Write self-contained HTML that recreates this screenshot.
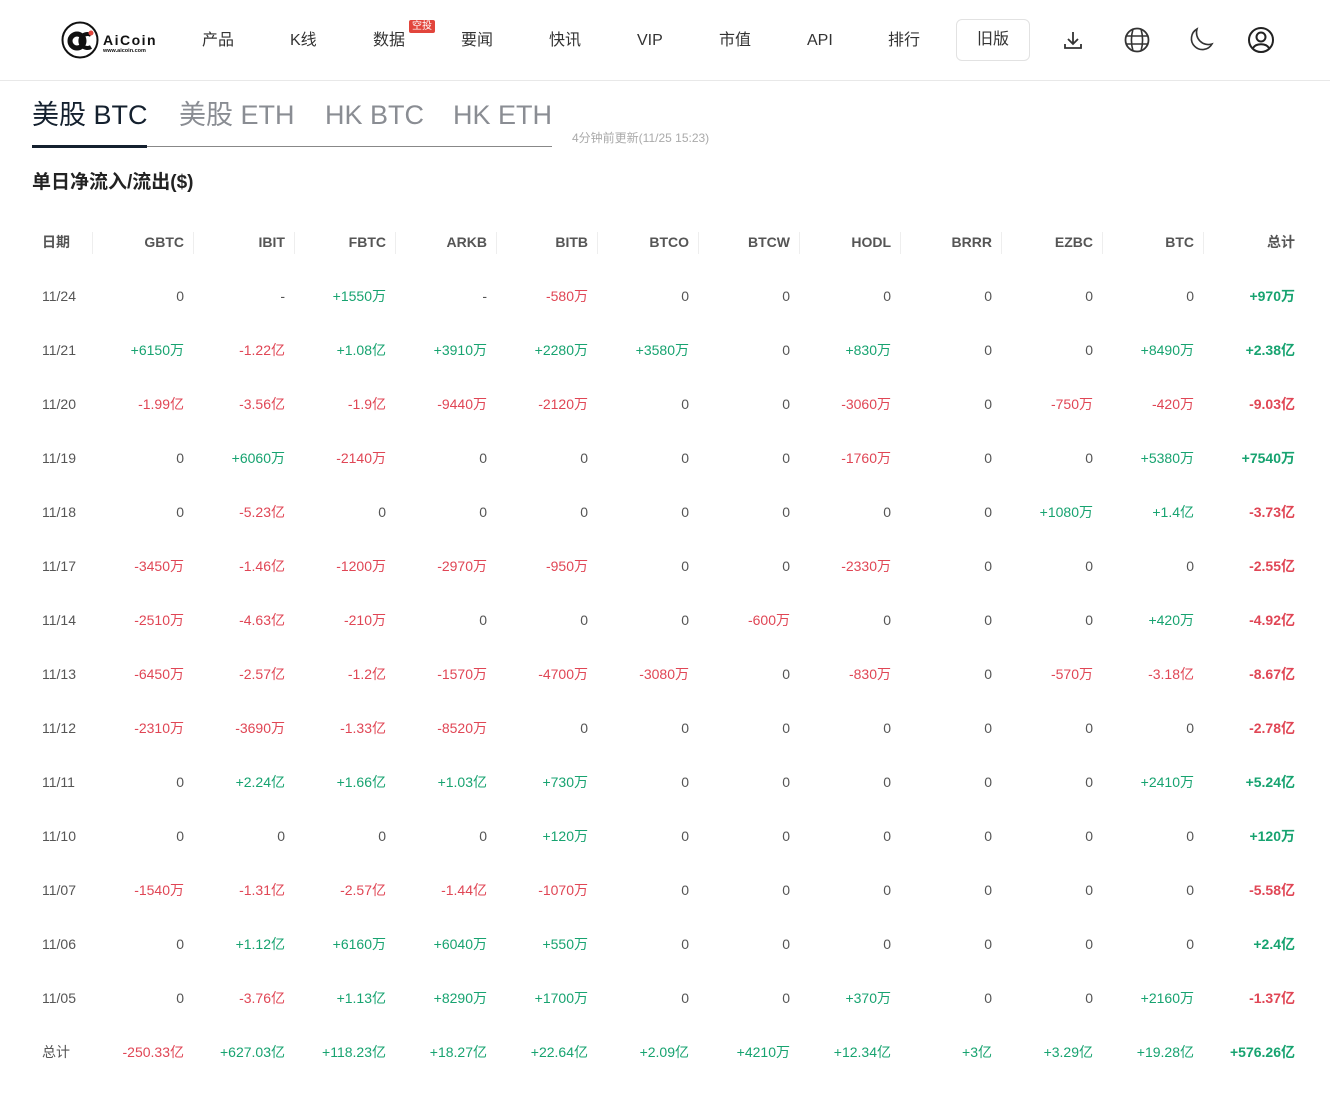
<!DOCTYPE html>
<html><head><meta charset="utf-8"><style>
*{margin:0;padding:0;box-sizing:border-box}
body{width:1330px;height:1120px;background:#fff;font-family:"Liberation Sans","Noto Sans CJK SC",sans-serif;color:#333;position:relative;overflow:hidden}
.hdr{position:absolute;left:0;top:0;width:1330px;height:81px;border-bottom:1px solid #e8e8e8}
.nav{position:absolute;top:30px;height:22px;line-height:22px;font-size:16px;color:#333}
.badge{position:absolute;left:409px;top:20px;background:#e2453c;color:#fff;font-size:10px;padding:0 3px;border-radius:2px;line-height:13px;height:13px}
.old{position:absolute;left:956px;top:19px;width:74px;height:42px;border:1px solid #e2e2e2;border-radius:6px;font-size:16px;text-align:center;line-height:40px;color:#333}
.ic{position:absolute;top:26px}
.tab{position:absolute;white-space:nowrap;top:97px;height:36px;line-height:36px;font-size:27px}
.tline{position:absolute;left:32px;top:146px;width:520px;height:1px;background:#888}
.tact{position:absolute;left:32px;top:145px;width:115px;height:3px;background:#14202e}
.upd{position:absolute;left:572px;top:130px;font-size:12px;color:#aaa;line-height:16px}
h2{position:absolute;left:32px;top:170px;font-size:19px;line-height:26px;font-weight:bold;color:#222}
table{position:absolute;left:32px;top:215px;border-collapse:collapse;table-layout:fixed;width:1273px}
td,th{height:54px;text-align:right;padding-right:10px;font-size:14px;color:#555;font-weight:normal;white-space:nowrap}
th{font-weight:bold;color:#555;font-size:14px;position:relative}
th::after{content:"";position:absolute;right:0;top:17px;width:1px;height:22px;background:#eee}
th:last-child::after{display:none}
td:first-child,th:first-child{text-align:left;padding-left:10px}
.g{color:#17a370}.r{color:#e04655}
td:last-child{font-weight:bold}
</style></head><body>
<div class="hdr">
<svg style="position:absolute;left:61px;top:21px" width="100" height="38" viewBox="0 0 100 38">
<circle cx="19" cy="19" r="17.5" fill="none" stroke="#111" stroke-width="2"/>
<circle cx="16" cy="20" r="7" fill="none" stroke="#111" stroke-width="5"/>
<path d="M30 14a7 7 0 1 0 0 12" fill="none" stroke="#111" stroke-width="4"/>
<circle cx="30" cy="12" r="2.5" fill="#e2453c"/>
<text x="42" y="24" font-size="14" font-weight="bold" font-family="Liberation Sans" fill="#111" letter-spacing="1.5">AiCoin</text>
<text x="42" y="31" font-size="5.5" font-weight="bold" font-family="Liberation Sans" fill="#111">www.aicoin.com</text>
</svg>
<div class="nav" style="left:202px">产品</div>
<div class="nav" style="left:290px">K线</div>
<div class="nav" style="left:373px">数据</div>
<div class="badge">空投</div>
<div class="nav" style="left:461px">要闻</div>
<div class="nav" style="left:549px">快讯</div>
<div class="nav" style="left:637px">VIP</div>
<div class="nav" style="left:719px">市值</div>
<div class="nav" style="left:807px">API</div>
<div class="nav" style="left:888px">排行</div>
<div class="old">旧版</div>
<svg class="ic" style="left:1061px" width="24" height="28" viewBox="0 0 24 28"><path d="M12 6v12M7 13l5 5 5-5M4 18v4h16v-4" fill="none" stroke="#333" stroke-width="1.8"/></svg>
<svg class="ic" style="left:1123px" width="28" height="28" viewBox="0 0 28 28"><circle cx="14" cy="14" r="11.5" fill="none" stroke="#333" stroke-width="1.8"/><path d="M2.5 10h23M2.5 18h23M10 3c-2 7-2 15 0 22M18 3c2 7 2 15 0 22" fill="none" stroke="#333" stroke-width="1.6"/></svg>
<svg class="ic" style="left:1187px" width="28" height="28" viewBox="0 0 28 28"><path d="M10 3a11 11 0 1 0 15 15A12 12 0 0 1 10 3z" fill="none" stroke="#333" stroke-width="1.6"/></svg>
<svg class="ic" style="left:1247px" width="28" height="28" viewBox="0 0 28 28"><circle cx="14" cy="14" r="12" fill="none" stroke="#222" stroke-width="2"/><circle cx="14" cy="11" r="4.5" fill="none" stroke="#222" stroke-width="2"/><path d="M6 22c3-5 13-5 16 0" fill="none" stroke="#222" stroke-width="2"/></svg>
</div>
<div class="tab" style="left:32px;color:#14202e">美股 BTC</div>
<div class="tab" style="left:179px;color:#8a8d93">美股 ETH</div>
<div class="tab" style="left:325px;color:#8a8d93">HK BTC</div>
<div class="tab" style="left:453px;color:#8a8d93">HK ETH</div>
<div class="tline"></div><div class="tact"></div>
<div class="upd">4分钟前更新(11/25 15:23)</div>
<h2>单日净流入/流出($)</h2>
<table>
<colgroup><col style="width:61px"><col span="12" style="width:101px"></colgroup>
<tr><th>日期</th><th>GBTC</th><th>IBIT</th><th>FBTC</th><th>ARKB</th><th>BITB</th><th>BTCO</th><th>BTCW</th><th>HODL</th><th>BRRR</th><th>EZBC</th><th>BTC</th><th>总计</th></tr>
<tr><td>11/24</td><td>0</td><td>-</td><td class="g">+1550万</td><td>-</td><td class="r">-580万</td><td>0</td><td>0</td><td>0</td><td>0</td><td>0</td><td>0</td><td class="g">+970万</td></tr>
<tr><td>11/21</td><td class="g">+6150万</td><td class="r">-1.22亿</td><td class="g">+1.08亿</td><td class="g">+3910万</td><td class="g">+2280万</td><td class="g">+3580万</td><td>0</td><td class="g">+830万</td><td>0</td><td>0</td><td class="g">+8490万</td><td class="g">+2.38亿</td></tr>
<tr><td>11/20</td><td class="r">-1.99亿</td><td class="r">-3.56亿</td><td class="r">-1.9亿</td><td class="r">-9440万</td><td class="r">-2120万</td><td>0</td><td>0</td><td class="r">-3060万</td><td>0</td><td class="r">-750万</td><td class="r">-420万</td><td class="r">-9.03亿</td></tr>
<tr><td>11/19</td><td>0</td><td class="g">+6060万</td><td class="r">-2140万</td><td>0</td><td>0</td><td>0</td><td>0</td><td class="r">-1760万</td><td>0</td><td>0</td><td class="g">+5380万</td><td class="g">+7540万</td></tr>
<tr><td>11/18</td><td>0</td><td class="r">-5.23亿</td><td>0</td><td>0</td><td>0</td><td>0</td><td>0</td><td>0</td><td>0</td><td class="g">+1080万</td><td class="g">+1.4亿</td><td class="r">-3.73亿</td></tr>
<tr><td>11/17</td><td class="r">-3450万</td><td class="r">-1.46亿</td><td class="r">-1200万</td><td class="r">-2970万</td><td class="r">-950万</td><td>0</td><td>0</td><td class="r">-2330万</td><td>0</td><td>0</td><td>0</td><td class="r">-2.55亿</td></tr>
<tr><td>11/14</td><td class="r">-2510万</td><td class="r">-4.63亿</td><td class="r">-210万</td><td>0</td><td>0</td><td>0</td><td class="r">-600万</td><td>0</td><td>0</td><td>0</td><td class="g">+420万</td><td class="r">-4.92亿</td></tr>
<tr><td>11/13</td><td class="r">-6450万</td><td class="r">-2.57亿</td><td class="r">-1.2亿</td><td class="r">-1570万</td><td class="r">-4700万</td><td class="r">-3080万</td><td>0</td><td class="r">-830万</td><td>0</td><td class="r">-570万</td><td class="r">-3.18亿</td><td class="r">-8.67亿</td></tr>
<tr><td>11/12</td><td class="r">-2310万</td><td class="r">-3690万</td><td class="r">-1.33亿</td><td class="r">-8520万</td><td>0</td><td>0</td><td>0</td><td>0</td><td>0</td><td>0</td><td>0</td><td class="r">-2.78亿</td></tr>
<tr><td>11/11</td><td>0</td><td class="g">+2.24亿</td><td class="g">+1.66亿</td><td class="g">+1.03亿</td><td class="g">+730万</td><td>0</td><td>0</td><td>0</td><td>0</td><td>0</td><td class="g">+2410万</td><td class="g">+5.24亿</td></tr>
<tr><td>11/10</td><td>0</td><td>0</td><td>0</td><td>0</td><td class="g">+120万</td><td>0</td><td>0</td><td>0</td><td>0</td><td>0</td><td>0</td><td class="g">+120万</td></tr>
<tr><td>11/07</td><td class="r">-1540万</td><td class="r">-1.31亿</td><td class="r">-2.57亿</td><td class="r">-1.44亿</td><td class="r">-1070万</td><td>0</td><td>0</td><td>0</td><td>0</td><td>0</td><td>0</td><td class="r">-5.58亿</td></tr>
<tr><td>11/06</td><td>0</td><td class="g">+1.12亿</td><td class="g">+6160万</td><td class="g">+6040万</td><td class="g">+550万</td><td>0</td><td>0</td><td>0</td><td>0</td><td>0</td><td>0</td><td class="g">+2.4亿</td></tr>
<tr><td>11/05</td><td>0</td><td class="r">-3.76亿</td><td class="g">+1.13亿</td><td class="g">+8290万</td><td class="g">+1700万</td><td>0</td><td>0</td><td class="g">+370万</td><td>0</td><td>0</td><td class="g">+2160万</td><td class="r">-1.37亿</td></tr>
<tr><td>总计</td><td class="r">-250.33亿</td><td class="g">+627.03亿</td><td class="g">+118.23亿</td><td class="g">+18.27亿</td><td class="g">+22.64亿</td><td class="g">+2.09亿</td><td class="g">+4210万</td><td class="g">+12.34亿</td><td class="g">+3亿</td><td class="g">+3.29亿</td><td class="g">+19.28亿</td><td class="g">+576.26亿</td></tr>
</table>
</body></html>
